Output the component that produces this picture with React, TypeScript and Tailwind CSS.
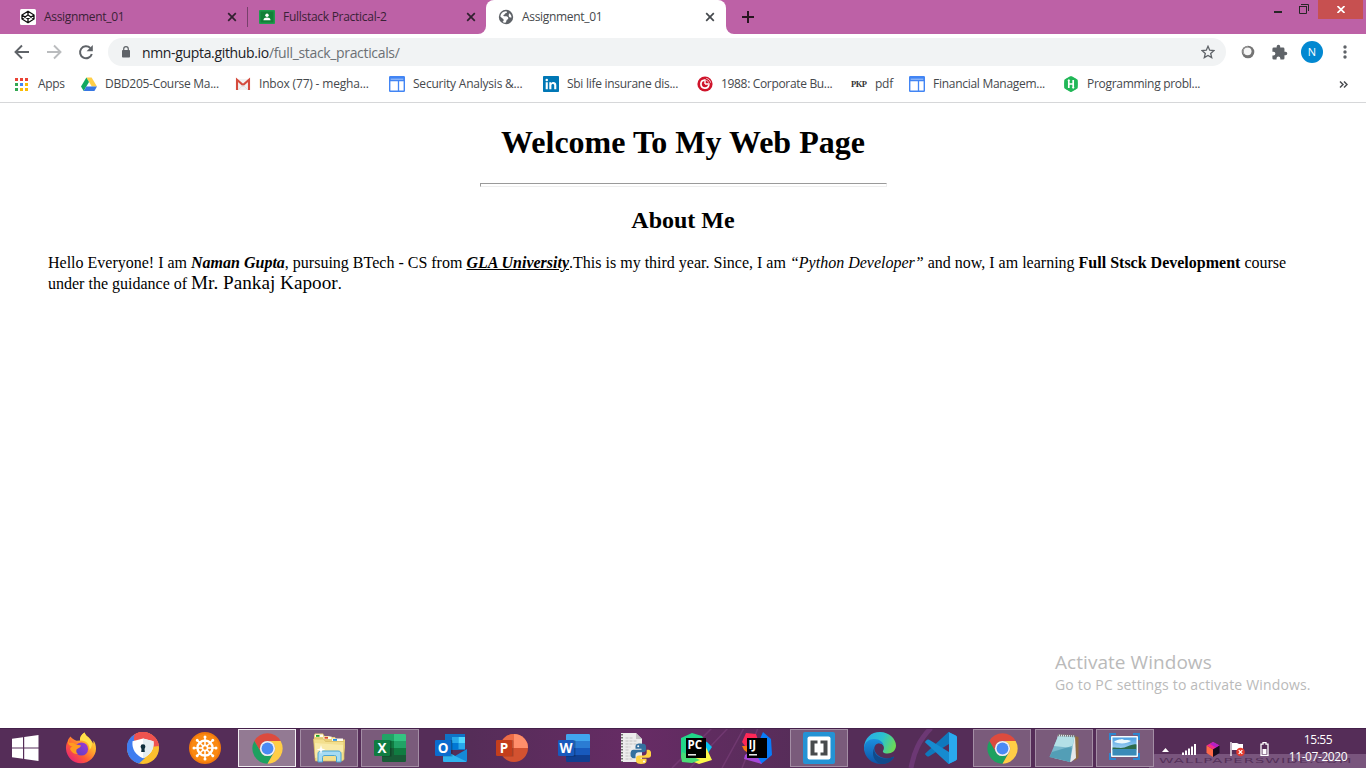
import React from "react";

type KidProps = { children?: React.ReactNode };

const Svg = ({ size, box = 16, children }: { size: number; box?: number; children: React.ReactNode }) => (
  <svg width={size} height={size} viewBox={`0 0 ${box} ${box}`} className="block shrink-0">
    {children}
  </svg>
);

/* ---------- browser icons ---------- */

const CodepenIcon = () => (
  <Svg size={16}>
    <rect width="16" height="16" rx="1.5" fill="#fff" />
    <path d="M8 2.2 14 6v4L8 13.8 2 10V6ZM2 6l6 4 6-4M2 10l6-4 6 4M8 2.2V6M8 10v3.8" fill="none" stroke="#111" strokeWidth="1.3" strokeLinejoin="round" />
  </Svg>
);

const ClassroomIcon = () => (
  <Svg size={16}>
    <rect y="1" width="16" height="14" rx="1" fill="#1e9b4d" />
    <rect x="1.5" y="2.5" width="13" height="11" fill="#128038" />
    <circle cx="8" cy="6.2" r="1.7" fill="#fff" />
    <path d="M4.4 11.2c0-1.9 1.9-2.6 3.6-2.6s3.6.7 3.6 2.6Z" fill="#fff" />
  </Svg>
);

const GlobeIcon = () => (
  <Svg size={16}>
    <circle cx="8" cy="8" r="7.2" fill="#5f6368" />
    <path d="M2.300 7.500C2.600 4.600 4.800 2.500 7.800 2.300c1.300.1 1.600.8.9 1.500-.5.6-1.700.4-1.900 1.300-.2.8-1.400.7-1.400 1.500 0 .9 1.100.7 2 .7 1.500 0 3 .4 2.900 1.900 0 1.200-1.600 1.100-1.800 2.200-.2 1-.4 1.900-1.300 2.300-1 .1-2-.3-2.700-.9.9-.5 1.300-1.200 1.100-2.100-.2-1-1.400-1.200-2-1.900-.4-.5-.8-1-1.300-1.300Z" fill="#fff" />
    <path d="M11 4.300c1.600.9 2.600 2.500 2.500 4.200-1 .3-2.400-.1-2.700-1.200-.3-1 .2-2 .2-3Z" fill="#fff" />
  </Svg>
);

const CloseX = ({ active = false }: { active?: boolean }) => (
  <svg width="10" height="10" viewBox="0 0 10 10" className="block shrink-0">
    <path d="m1.200 1.200 7.600 7.600M8.800 1.200 1.200 8.800" stroke={active ? "#45494d" : "#30202e"} strokeWidth="1.700" />
  </svg>
);

const DriveIcon = () => (
  <Svg size={16}>
    <path d="M5.400 1.500h5.200L16 10.500h-5.200Z" fill="#ffcf48" />
    <path d="M5.400 1.500 8 6 2.700 15 0 10.500Z" fill="#11a861" />
    <path d="M5.300 10.500H16L13.400 15H2.700Z" fill="#3777e3" />
  </Svg>
);

const GmailIcon = () => (
  <Svg size={16}>
    <path d="M1.500 3h13v11h-13Z" fill="#f2f2f2" />
    <path d="M2 14V3.800L8 9l6-5.200V14" fill="none" stroke="#d54b3d" strokeWidth="2.100" />
    <path d="m3 14 5-5 5 5" fill="none" stroke="#ddd" strokeWidth=".7" />
  </Svg>
);

const SitesIcon = () => (
  <Svg size={16}>
    <rect x=".7" y=".7" width="14.600" height="14.600" rx=".5" fill="#fff" stroke="#4285f4" strokeWidth="1.400" />
    <path d="M1 1h14v3.200H1Z" fill="#4285f4" />
    <path d="M1 4.700h14M9.500 4.700V15" stroke="#4285f4" strokeWidth="1.300" />
    <path d="M1.700 3.200h12.600" stroke="#c7dcfc" strokeWidth=".8" />
  </Svg>
);

const LinkedInIcon = () => (
  <Svg size={16}>
    <rect width="16" height="16" rx=".8" fill="#0077b5" />
    <path d="M2.700 6.200h2.100v7H2.700ZM6.300 6.200h2v1c.9-1.800 5-1.700 5 1.700v4.300h-2.100V9.500c0-2.100-2.800-2-2.800 0v3.700H6.300Z" fill="#fff" />
    <circle cx="3.750" cy="3.900" r="1.250" fill="#fff" />
  </Svg>
);

const RedIcon = () => (
  <Svg size={16}>
    <circle cx="8" cy="8" r="7.600" fill="#cf142b" />
    <path d="M7.700 4.100a4 4 0 1 0 4.200 4.500" fill="none" stroke="#fff" strokeWidth="1.700" />
    <path d="M8 8V3.300M8 8h4.700" stroke="#fff" strokeWidth="1.400" />
    <path d="M9.300 2.500c2.200.3 3.900 1.800 4.300 4.200M9.300 4.500c1.300.2 2.100 1 2.400 2.200" fill="none" stroke="#f4c3ca" strokeWidth="1" />
  </Svg>
);

const HackerRankIcon = () => (
  <Svg size={16}>
    <path d="M8 0c.6 0 6.200 3.200 6.600 3.800.4.600.4 7.800 0 8.400C14.200 12.800 8.600 16 8 16s-6.200-3.200-6.600-3.800c-.4-.6-.4-7.800 0-8.400C1.800 3.200 7.400 0 8 0Z" fill="#21b757" />
    <path d="M5.800 3.800v8.200M10.200 4v8.200M5.800 8h4.400" stroke="#fff" strokeWidth="1.700" />
    <path d="m4.300 4.800 1.500-1.600 1.500 1.600ZM8.700 11.200l1.500 1.600 1.500-1.600Z" fill="#fff" />
  </Svg>
);

const AppsIcon = () => {
  const colors = ["#ea4335", "#ea4335", "#ea4335", "#34a853", "#4285f4", "#fbbc05", "#34a853", "#fbbc05", "#fbbc05"];
  return (
    <Svg size={13} box={13}>
      {colors.map((c, i) => (
        <rect key={i} x={(i % 3) * 5} y={Math.floor(i / 3) * 5} width="3" height="3" fill={c} />
      ))}
    </Svg>
  );
};

/* ---------- taskbar icons ---------- */

const ChromeIcon = () => (
  <Svg size={31} box={48}>
    <path d="M3.650 12.250A23.500 23.500 0 0 1 44.350 12.250H24A11.750 11.750 0 0 0 13.800 29.800Z" fill="#dd4b3e" />
    <path d="M3.650 12.250 13.800 29.800A11.750 11.750 0 0 0 34.200 29.900L24 47.500A23.500 23.500 0 0 1 3.650 12.250Z" fill="#1da160" />
    <path d="M44.350 12.250A23.500 23.500 0 0 1 24 47.500L34.200 29.900A11.750 11.750 0 0 0 24 12.250Z" fill="#ffcd46" />
    <circle cx="24" cy="24" r="11.800" fill="#f1f1f1" />
    <circle cx="24" cy="24" r="9.200" fill="#4a8af4" />
  </Svg>
);

const FirefoxIcon = () => (
  <Svg size={32} box={32}>
    <defs>
      <linearGradient id="ffOuter" x1="1" y1="0" x2=".1" y2="1">
        <stop offset="0" stopColor="#fff44f" />
        <stop offset=".35" stopColor="#ffb12b" />
        <stop offset=".65" stopColor="#ff5a36" />
        <stop offset="1" stopColor="#e31587" />
      </linearGradient>
      <linearGradient id="ffInner" x1="0" y1="1" x2="1" y2="0">
        <stop offset="0" stopColor="#5b3fc0" />
        <stop offset="1" stopColor="#a13bd6" />
      </linearGradient>
    </defs>
    <path d="M5.500 4.500C4 6 3 7.500 2.700 9.300 1.300 11.500.8 14.300 1 17c.6 8 7 14.300 15 14.300S31 24.600 31 16.700c0-3.500-1-6.500-2.700-8.300.2 1.600.2 2.500 0 3.400C26.500 7 21.500 5.500 19.500.5c-3.500 2-4.700 5-4.500 8l-3.500.3C9 8 7 6.500 5.500 4.500Z" fill="url(#ffOuter)" />
    <circle cx="16.500" cy="17" r="6.600" fill="url(#ffInner)" />
    <path d="M5.500 4.500C4 6.500 3.500 8.500 4 11c2-.5 4.800-.3 6.500 1.200 2 1 4.500.6 5.500 1.400-.5 2-2.600 2.500-4.500 3.800-.5 2-.1 3.600 1.500 4.600-3 .6-6.300-1.500-7.500-4-1-2 .7-3 2-3.500C4 14 3 12 3 9Z" fill="#ff9a1f" />
    <path d="M19.500.5c-3.500 2-4.700 5-4.500 8 6-.5 10 3.500 9.500 9.500C30 12 25 6 22.500 4.500 21 3.500 20 2 19.500.5Z" fill="#ffe04a" />
  </Svg>
);

const LockBrowserIcon = () => (
  <Svg size={32} box={32}>
    <circle cx="16" cy="16" r="16" fill="#fbc02d" />
    <path d="M16 16 6 3.500A16 16 0 0 1 31.900 14Z" fill="#ee5350" />
    <path d="M6 3.500A16 16 0 0 0 12 31.500L18 26 9 20 7.500 8Z" fill="#3f7df0" />
    <path d="M6 3.500 7.500 9 26.500 9.300 31.900 14A16 16 0 0 0 6 3.500Z" fill="#ee5350" />
    <path d="M8 2.200A16 16 0 0 0 11 31.200C7 27 5 21 5.500 9.300Z" fill="#3f7df0" />
    <path d="M16 6.500 26.500 9.300c.8 8-3 13.700-10.500 17C8.500 23 4.700 17.300 5.500 9.300Z" fill="#fff" />
    <path d="M16 6.500v19.800c7.500-3.300 11.300-9 10.500-17Z" fill="#e3edf1" />
    <circle cx="16" cy="14.700" r="2.400" fill="#10303e" />
    <path d="M14.700 15h2.600l.5 5h-3.600Z" fill="#10303e" />
  </Svg>
);

const WheelIcon = () => {
  const spokes = [0, 45, 90, 135, 180, 225, 270, 315];
  return (
    <Svg size={32} box={32}>
      <circle cx="16" cy="16" r="16" fill="#f27a0c" />
      <circle cx="16" cy="16" r="14" fill="#fa8912" />
      <circle cx="16" cy="16" r="7.500" fill="none" stroke="#fff" strokeWidth="2.400" />
      <circle cx="16" cy="16" r="2.600" fill="none" stroke="#fff" strokeWidth="1.700" />
      {spokes.map((a) => (
        <g key={a} transform={`rotate(${a} 16 16)`}>
          <path d="M16 13.500V4.500" stroke="#fff" strokeWidth="1.600" />
          <circle cx="16" cy="5" r="1.500" fill="#fff" />
        </g>
      ))}
    </Svg>
  );
};

const FolderIcon = () => (
  <Svg size={34} box={34}>
    <path d="M2 9V4l1-1.500h8L12.500 5H17l1 1h5l1 2.500h9v8l-2 13H3Z" fill="#e9cf78" />
    <path d="M3 3.500h8V6H3ZM11.500 5.500h8V8h-8ZM20 7.500h11V10H20Z" fill="#fffdf0" />
    <path d="M4 4h3.500v1.800H4Z" fill="#1fa51f" />
    <path d="M12.500 5.900H16v1.800h-3.500Z" fill="#d74a27" />
    <path d="M21 8h4v1.800h-4Z" fill="#2391e5" />
    <path d="M1.500 8h10l2 2.500H32v18l-2 1.500H3.500Z" fill="#f3df8e" stroke="#d9bb62" strokeWidth=".7" />
    <path d="m3 12 28 2v7L3 27Z" fill="#fbeeb4" opacity=".7" />
    <path d="M6 31V23c0-2 1-3 3-3h17c2 0 3 1 3 3v8h-4.500v-5c0-1-1-1.500-2-1.500H13c-1.500 0-2.500.5-2.500 2V31Z" fill="#a6dbf3" stroke="#4aa4d2" strokeWidth="1" />
    <path d="m9 14 1 3.500 3.500 1-3.500 1-1 3.500-1-3.500-3.500-1 3.500-1Z" fill="#fff" />
  </Svg>
);

const OfficeTile = ({ letter, fill }: { letter: string; fill: string }) => (
  <g>
    <rect x="0" y="8" width="16" height="16" rx="1.300" fill={fill} />
    <text x="8" y="20.700" textAnchor="middle" fontSize="13.500" fontWeight="700" fill="#fff" fontFamily="Open Sans, sans-serif">
      {letter}
    </text>
  </g>
);

const ExcelIcon = () => (
  <Svg size={32} box={32}>
    <path d="M8 3.200Q8 2 9.200 2H20v7H8Z" fill="#21a366" />
    <path d="M20 2h10.800Q32 2 32 3.200V9H20Z" fill="#33c481" />
    <path d="M8 9h12v7H8ZM8 16h12v7H8Z" fill="#107c41" />
    <path d="M20 9h12v7H20Z" fill="#21a366" />
    <path d="M20 16h12v7H20Z" fill="#107c41" />
    <path d="M8 16h12v7h12v5.800Q32 30 30.800 30H9.200Q8 30 8 28.800Z" fill="#185c37" />
    <path d="M8 8h8.500Q17.500 8 17.500 9v15.500H8Z" fill="#000" opacity=".22" />
    <OfficeTile letter="X" fill="#107c41" />
  </Svg>
);

const OutlookIcon = () => (
  <Svg size={32} box={32}>
    <path d="M10 2h20v16H10Z" fill="#0f73c7" />
    <path d="M17 5h6.500v6H17Z" fill="#28a8ea" />
    <path d="M23.500 5H30v6h-6.500Z" fill="#50d9ff" />
    <path d="M17 11h6.500v6H17Z" fill="#0078d4" />
    <path d="M23.500 11H30v6h-6.500Z" fill="#28a8ea" />
    <path d="M8 17l12 7 12-7v11.500Q32 30 30.500 30h-21Q8 30 8 28.500Z" fill="#1489d8" />
    <path d="m8 17 12 7 11.500 5.500Q31 30 30.500 30h-21Q8 30 8 28.500Z" fill="#2fb3ee" />
    <path d="M8 8h8.500Q17.500 8 17.500 9v15.500H8Z" fill="#000" opacity=".22" />
    <OfficeTile letter="O" fill="#0a6cce" />
  </Svg>
);

const PowerPointIcon = () => (
  <Svg size={32} box={32}>
    <circle cx="18" cy="16" r="14" fill="#d35230" />
    <path d="M4 16A14 14 0 0 1 18 2V16Z" fill="#ed6c47" />
    <path d="M18 2A14 14 0 0 1 32 16H18Z" fill="#ff8f6b" />
    <path d="M6 8h10.500Q17.500 8 17.500 9v15.500H7Z" fill="#000" opacity=".2" />
    <OfficeTile letter="P" fill="#c43e1c" />
  </Svg>
);

const WordIcon = () => (
  <Svg size={32} box={32}>
    <path d="M8 3.200Q8 2 9.200 2h21.600Q32 2 32 3.200V9H8Z" fill="#41a5ee" />
    <path d="M8 9h24v7H8Z" fill="#2b7cd3" />
    <path d="M8 16h24v7H8Z" fill="#185abd" />
    <path d="M8 23h24v5.800Q32 30 30.800 30H9.200Q8 30 8 28.800Z" fill="#103f91" />
    <path d="M8 8h8.500Q17.500 8 17.500 9v15.500H8Z" fill="#000" opacity=".22" />
    <OfficeTile letter="W" fill="#185abd" />
  </Svg>
);

const PythonIcon = () => (
  <Svg size={32} box={32}>
    <path d="M2 1h15l6 6v23H2Z" fill="#ececec" />
    <path d="M17 1v6h6Z" fill="#c4c4c4" />
    <path d="M3 2v28" stroke="#555" strokeWidth="1.600" strokeDasharray="1.500 1.500" />
    <path d="M6.500 6h8M6.500 9h12M6.500 12h14M6.500 15h5M6.500 18h4M6.500 21h5M6.500 24h7M6.500 27h8" stroke="#c2c2c2" strokeWidth="1" strokeDasharray="3 1" />
    <path d="M21.500 11.500c-4 0-5 1.200-5 3.300v2h6v1h-8c-2 0-3 1.500-3 4.200s1.200 4.200 3 4.200h2v-3c0-2 1.500-3 3-3h4.500c1.800 0 3-1.300 3-3v-3c0-2-2-2.700-5.500-2.700Z" fill="#34709f" />
    <circle cx="19.200" cy="14.300" r="1" fill="#fff" />
    <path d="M22 32c4.200 0 5.500-1.200 5.500-3.300v-2h-6v-1h8c2 0 2.700-1.500 2.700-3.700s-1-4.200-2.700-4.200h-1.800v2.800c0 2-1.500 3-3 3H20c-2 0-3 1.300-3 3v2.400c0 2 2 3 5 3Z" fill="#ffd344" />
    <circle cx="25" cy="29.500" r="1" fill="#fff" />
  </Svg>
);

const JetLabel = ({ text }: { text: string }) => (
  <g>
    <rect x="6" y="6" width="20" height="20" fill="#000" />
    <text x="7.500" y="17" fontSize="11.500" fontWeight="700" fill="#fff" fontFamily="Open Sans, sans-serif">
      {text}
    </text>
    <path d="M8 22.800h8" stroke="#fff" strokeWidth="1.400" />
  </g>
);

const PyCharmIcon = () => (
  <Svg size={32} box={32}>
    <path d="m1 6 11-5 10 3 4 7v12L1 25Z" fill="#21d789" />
    <path d="m21 8 6 2 5 5-4 6-8 2Z" fill="#07c3f2" />
    <path d="m24 11 8 17-13 4-13-5 12-7Z" fill="#fcf84a" />
    <path d="m2 20 18 8-8 3-10-1-1-5Z" fill="#49dc76" />
    <JetLabel text="PC" />
  </Svg>
);

const IntelliJIcon = () => (
  <Svg size={32} box={32}>
    <path d="m5 1 10 1 3 9L7 18 1 10Z" fill="#fe2857" />
    <path d="M1 14h9v9l-7-5Z" fill="#f97a12" />
    <path d="m22 0 8 7 1 16-11 9-9-7Z" fill="#087cfa" />
    <path d="m4 23 8-5 9 14-18-5Z" fill="#a647d8" />
    <JetLabel text="IJ" />
  </Svg>
);

const BracketsIcon = () => (
  <Svg size={32} box={32}>
    <rect width="32" height="32" rx="2" fill="#2493d5" />
    <rect x="4.500" y="4.500" width="23" height="23" rx="2" fill="#fff" />
    <path d="M14.500 8.500h-7v15h7v-3h-3v-9h3ZM17.500 8.500h7v15h-7v-3h3v-9h-3Z" fill="#484b4d" />
  </Svg>
);

const EdgeIcon = () => (
  <Svg size={32} box={32}>
    <defs>
      <linearGradient id="edgeTop" x1="0" y1=".2" x2="1" y2=".5">
        <stop offset="0" stopColor="#2aa9e8" />
        <stop offset=".55" stopColor="#2bc3cf" />
        <stop offset="1" stopColor="#6bd957" />
      </linearGradient>
      <linearGradient id="edgeLow" x1="0" y1="0" x2="0" y2="1">
        <stop offset="0" stopColor="#1b8fdf" />
        <stop offset="1" stopColor="#0c52a5" />
      </linearGradient>
    </defs>
    <path d="M0 15C1 6 7 0 16 0s16 7 16 13.500c0 5-4 8-8.500 8-4 0-5.300-1.500-4.300-3 2-3 0-7.500-5-7.500-6 0-10.500 5-10.500 10C1 20 0 18 0 15Z" fill="url(#edgeTop)" />
    <path d="M0 15c1-5 5-8 10-8 6 0 9.500 3.500 9.700 7-1.700-3-5-3.500-7-2C8 15 10 25 22 26.500c3 .3 5.500-.7 7-1.500.8-.4 1 0 .6.700C27 30 22 32 17 32 7 32-.5 24 0 15Z" fill="url(#edgeLow)" />
    <path d="M12 13c-4 5-1 12 8 13.500 4 .5 7-.6 9-1.500.8-.4 1 0 .6.700C27 30 22 32 17 32c-7-2-11-11-5-19Z" fill="#114a8b" />
  </Svg>
);

const VSCodeIcon = () => (
  <Svg size={32} box={32}>
    <path d="m23.500 0 7.300 3.500Q32 4 32 5.500V7L4.200 24.200Q3 25 2 24.200L.5 22.800q-.8-.8 0-1.600Z" fill="#0f78bd" />
    <path d="m23.500 32 7.300-3.500Q32 28 32 26.500V25L4.200 7.800Q3 7 2 7.800L.5 9.200q-.8.800 0 1.600Z" fill="#168bd0" />
    <path d="M23.500 0 30.800 3.500Q32 4 32 5.500v21q0 1.500-1.200 2L23.500 32Q24 31.500 24 30V2Q24 .5 23.500 0Z" fill="#2aa9ee" />
  </Svg>
);

const NotepadIcon = () => (
  <Svg size={34} box={34}>
    <path d="M27 5 31.500 6v21L27 30Z" fill="#8f6c42" />
    <path d="m11 3.500 17 1L29 27l-5 4L7 27Z" fill="#e5e9ea" />
    <path d="M11 5.500h16.500L23 31 2.500 26Z" fill="#7ab9cd" />
    <path d="M11 5.500h16.500L25 17 7 15Z" fill="#b4e0e6" />
    <path d="M5 21 25 15 23 31 2.500 26Z" fill="#4796ad" opacity=".75" />
    <path d="m11 4 17 1" stroke="#777" strokeWidth="2.500" strokeDasharray="1 1" />
  </Svg>
);

const PhotoIcon = () => (
  <svg width="31" height="27" viewBox="0 0 31 27" className="-mt-1 block shrink-0">
    <defs>
      <linearGradient id="photoSky" x1="0" y1="0" x2="0" y2="1">
        <stop offset="0" stopColor="#4a9fe4" />
        <stop offset="1" stopColor="#d9eff8" />
      </linearGradient>
    </defs>
    <path d="M1 7V1h6M24 1h6v6M30 20v6h-6M7 26H1v-6" fill="none" stroke="#2e86cf" strokeWidth="2" />
    <rect x="2" y="3" width="27" height="21" rx="1" fill="#f6fafc" />
    <rect x="3.500" y="4.500" width="24" height="18" fill="url(#photoSky)" />
    <path d="M5 9c3-3 6-2 8-3 3 2 6 0 9 2-4 3-12 3-17 1Z" fill="#eef8fc" />
    <path d="M3.500 14.500c5 0 8 1 12 0s8-4 12-3v5h-24Z" fill="#2c6b4a" />
    <path d="M3.500 16h24v6.500h-24Z" fill="#3a8bb8" />
  </svg>
);

const WindowsIcon = () => (
  <svg width="27" height="26" viewBox="0 0 27 26" className="block shrink-0">
    <path d="M0 3.700 11 2.200v10.200H0ZM12.200 2 26.500 0v12.400H12.200ZM0 13.600h11v10.200L0 22.300ZM12.200 13.600h14.300V26l-14.300-2Z" fill="#fff" />
  </svg>
);

/* ---------- browser frame ---------- */

const ui = "font-['Open_Sans','Noto_Sans',sans-serif]";

const Bookmark = ({ icon, label, width, tracking }: { icon: React.ReactNode; label: string; width: string; tracking: string }) => (
  <div className={`flex shrink-0 items-center gap-2 ${width}`}>
    {icon}
    <span className={`whitespace-pre text-[12px] leading-4 text-[#45484c] ${tracking}`}>{label}</span>
  </div>
);

const TabStrip = () => (
  <div className="flex h-[34px] bg-white">
    <div className="flex w-[486px] items-center rounded-br-[8px] bg-[#bd61a6] text-[12px] text-[#3a2136]">
      <div className="flex h-5 w-[248px] items-center border-r border-[#77406b] pl-5 pr-[10px]">
        <CodepenIcon />
        <span className="ml-2 flex-1 tracking-[-0.32px]">Assignment_01</span>
        <CloseX />
      </div>
      <div className="flex h-5 w-[238px] items-center pl-[11px] pr-[10px]">
        <ClassroomIcon />
        <span className="ml-2 flex-1 tracking-[-0.28px]">Fullstack Practical-2</span>
        <CloseX />
      </div>
    </div>
    <div className="w-[240px] bg-linear-to-b from-[#bd61a6] from-30% to-white to-30%">
      <div className="flex h-full items-center rounded-t-[8px] bg-white pl-3 pr-[11px] text-[12px] text-[#45484c]">
        <GlobeIcon />
        <span className="ml-2 flex-1 tracking-[-0.32px]">Assignment_01</span>
        <CloseX active />
      </div>
    </div>
    <div className="flex flex-1 items-start justify-between rounded-bl-[8px] bg-[#bd61a6]">
      <svg width="12" height="12" viewBox="0 0 12 12" className="ml-4 mt-[11px]">
        <path d="M6 0v12M0 6h12" stroke="#27151f" strokeWidth="2" />
      </svg>
      <div className="flex pr-[3px]">
        <svg width="44" height="19" viewBox="0 0 44 19">
          <path d="M0 11h8v2H0Z" fill="#262626" />
          <path d="M25.500 6.500h7v7h-7ZM25 6.500h8" fill="none" stroke="#262626" />
          <path d="M27 4.500h7.500V11" fill="none" stroke="#262626" />
        </svg>
        <div className="flex h-[19px] w-[45px] items-center justify-center bg-[#c75050]">
          <svg width="8" height="7" viewBox="0 0 8 7">
            <path d="m.5 0 7 7M7.500 0l-7 7" stroke="#fff" strokeWidth="1.700" />
          </svg>
        </div>
      </div>
    </div>
  </div>
);

const Toolbar = () => (
  <div className="flex h-9 items-center pl-[14px]">
    <svg width="84" height="16" viewBox="0 0 84 16" className="shrink-0">
      <path d="M15 8H2M8 1.500 1.500 8 8 14.500" fill="none" stroke="#5f6368" strokeWidth="1.900" />
      <path d="M33 8h13M40 1.500 46.500 8 40 14.500" fill="none" stroke="#babcbe" strokeWidth="1.900" />
      <path d="M76.300 4A6 6 0 1 0 77.800 10" fill="none" stroke="#5f6368" strokeWidth="2" />
      <path d="M78.800 1v6.200h-6.200Z" fill="#5f6368" />
    </svg>
    <div className="ml-[10px] flex h-7 w-[1118px] shrink-0 items-center rounded-full bg-[#f1f3f4] pl-[14px] pr-[11px]">
      <svg width="8" height="12" viewBox="0 0 8 12" className="shrink-0">
        <rect y="4" width="8" height="7.500" rx=".8" fill="#5f6368" />
        <path d="M1.700 5V3a2.300 2.300 0 0 1 4.600 0v2" fill="none" stroke="#5f6368" strokeWidth="1.200" />
      </svg>
      <span className="ml-3 flex-1 text-[14px] tracking-[-0.34px] text-[#6c7074]">
        <span className="text-[#202124]">nmn-gupta.github.io</span>/full_stack_practicals/
      </span>
      <svg width="14" height="14" viewBox="0 0 14 14" className="shrink-0">
        <path d="m7 1.300 1.700 3.900 4.200.4L9.700 8.400l1 4.200L7 10.400l-3.700 2.200 1-4.200L1.100 5.600l4.200-.4Z" fill="none" stroke="#5f6368" strokeWidth="1.300" />
      </svg>
    </div>
    <svg width="14" height="14" viewBox="0 0 14 14" className="ml-[15px] shrink-0">
      <circle cx="7" cy="7" r="6.300" fill="#747474" />
      <circle cx="6.600" cy="6.300" r="3.900" fill="#f6f6f6" />
      <path d="M2.600 9A4.800 4.800 0 0 1 7 1.700" fill="none" stroke="#a5a5a5" />
    </svg>
    <svg width="17" height="17" viewBox="0 0 24 24" className="ml-4 shrink-0">
      <path d="M20.500 11H19V7a2 2 0 0 0-2-2h-4V3.500a2.500 2.500 0 0 0-5 0V5H4a2 2 0 0 0-2 2v3.800h1.500a2.700 2.700 0 0 1 0 5.400H2V20a2 2 0 0 0 2 2h3.800v-1.500a2.700 2.700 0 0 1 5.400 0V22H17a2 2 0 0 0 2-2v-4h1.500a2.500 2.500 0 0 0 0-5Z" fill="#5f6368" />
    </svg>
    <div className="ml-[13px] flex size-[22px] shrink-0 items-center justify-center rounded-full bg-[#0288d1] text-[11px] text-white">N</div>
    <svg width="4" height="14" viewBox="0 0 4 14" className="ml-5 shrink-0">
      <circle cx="2" cy="2" r="1.700" fill="#5f6368" />
      <circle cx="2" cy="7" r="1.700" fill="#5f6368" />
      <circle cx="2" cy="12" r="1.700" fill="#5f6368" />
    </svg>
  </div>
);

const Bookmarks = () => (
  <div className="flex h-[33px] items-center border-b border-[#d6d7d9] pb-1 pl-[15px]">
    <div className="flex w-[66px] shrink-0 items-center gap-[10px]">
      <AppsIcon />
      <span className="text-[12px] leading-4 tracking-[-0.3px] text-[#45484c]">Apps</span>
    </div>
    <Bookmark icon={<DriveIcon />} label="DBD205-Course Ma..." width="w-[154px]" tracking="tracking-[-0.28px]" />
    <Bookmark icon={<GmailIcon />} label="Inbox (77) - megha..." width="w-[154px]" tracking="tracking-[-0.18px]" />
    <Bookmark icon={<SitesIcon />} label="Security Analysis &..." width="w-[154px]" tracking="tracking-[-0.22px]" />
    <Bookmark icon={<LinkedInIcon />} label="Sbi life insurane dis..." width="w-[154px]" tracking="tracking-[-0.28px]" />
    <Bookmark icon={<RedIcon />} label="1988: Corporate Bu..." width="w-[154px]" tracking="tracking-[-0.33px]" />
    <Bookmark
      icon={<span className="w-4 font-['Liberation_Serif',serif] text-[8.5px] font-bold leading-4 tracking-[-0.5px] text-[#333]">PKP</span>}
      label="pdf"
      width="w-[58px]"
      tracking="tracking-[-0.25px]"
    />
    <Bookmark icon={<SitesIcon />} label="Financial Managem..." width="w-[154px]" tracking="tracking-[-0.28px]" />
    <Bookmark icon={<HackerRankIcon />} label="Programming probl..." width="w-[154px]" tracking="tracking-[-0.29px]" />
    <svg width="9" height="7" viewBox="0 0 9 7" className="ml-auto mr-[18px] shrink-0">
      <path d="m1 .5 3 3-3 3M5 .5l3 3-3 3" fill="none" stroke="#4b4e52" strokeWidth="1.500" />
    </svg>
  </div>
);

/* ---------- web page ---------- */

const WebPage = () => (
  <main className="flex flex-1 flex-col px-12 font-['Liberation_Serif',serif] text-[16px] text-black">
    <h1 className="mt-[21px] text-center text-[32px] font-bold leading-[37px]">Welcome To My Web Page</h1>
    <hr className="mx-auto mt-[22px] h-1 w-[407px] border border-b-[#eee] border-l-[#9a9a9a] border-r-[#eee] border-t-[#9a9a9a]" />
    <h2 className="mt-[19px] text-center text-[24px] font-bold leading-7">About Me</h2>
    <p className="mt-[18px] whitespace-nowrap leading-[21px]">
      Hello Everyone! I am <b><i>Naman Gupta</i></b>, pursuing BTech - CS from <b><i className="underline">GLA University</i></b>
      .This is my third year. Since, I am <i>“Python Developer”</i> and now, I am learning <b>Full Stsck Development</b> course
      <br />
      under the guidance of <span className="text-[19.2px] leading-none">Mr. Pankaj Kapoor</span>.
    </p>
    <div className={`mb-[33px] mr-2 mt-auto w-[255px] self-end text-[#bababa] ${ui}`}>
      <div className="whitespace-nowrap text-[19px] leading-6 tracking-[0.05px]">Activate Windows</div>
      <div className="whitespace-nowrap text-[14px] leading-[21px] tracking-[0.17px]">Go to PC settings to activate Windows.</div>
    </div>
  </main>
);

/* ---------- taskbar ---------- */

const Slot = ({ children }: KidProps) => <div className="flex w-[61.25px] shrink-0 items-center justify-center">{children}</div>;

const OpenSlot = ({ children, active = false }: KidProps & { active?: boolean }) => (
  <Slot>
    <div
      className={
        active
          ? "flex h-[38px] w-[58px] items-center justify-center border border-[#f1ecf1] bg-[#937a93]"
          : "flex h-[38px] w-[58px] items-center justify-center border border-[#a48ea5] bg-[#7a5b7b]"
      }
    >
      {children}
    </div>
  </Slot>
);

const Tray = () => (
  <div className="ml-auto flex h-full items-center text-white">
    <svg width="112" height="20" viewBox="0 0 112 20" className="mt-px">
      <path d="m0 13 3.500-4L7 13Z" fill="#fff" />
      <path d="M20 13.500h2V16h-2ZM23 11.500h2V16h-2ZM26 9.500h2V16h-2ZM29 7.500h2V16h-2ZM32 5h2v11h-2Z" fill="#fff" />
      <path d="m51 3 6.500 3.500-6.500 4-6.500-4Z" fill="#f32a8c" />
      <path d="m44.500 6.500 6.500 4V18l-6.500-4Z" fill="#ff6a48" />
      <path d="m51 3 6.500 3.500L54 8.700 48 5Z" fill="#b321c4" />
      <path d="m57.500 6.500-6.500 4V18l6.500-4Z" fill="#160c1e" />
      <path d="M69 3v14" stroke="#fff" strokeWidth="1.300" />
      <path d="M70 4h5l2 1h4v7h-4l-2-1h-5Z" fill="#fff" />
      <circle cx="78.500" cy="13" r="4.300" fill="#e43b2e" />
      <path d="m76.700 11.200 3.600 3.600M80.300 11.200l-3.600 3.600" stroke="#fff" strokeWidth="1.200" />
      <path d="M101 3.700h3v1.500h2v11.100h-7V5.200h2Z" fill="none" stroke="#fff" strokeWidth="1.300" />
      <path d="M100.500 10h4v5h-4Z" fill="#fff" />
    </svg>
    <div className="flex w-[92px] flex-col items-center pr-1 text-[12px] leading-[17px] tracking-[-0.42px]">
      <span>15:55</span>
      <span>11-07-2020</span>
    </div>
  </div>
);

const Taskbar = () => (
  <footer className="relative isolate flex h-10 items-center overflow-hidden bg-[#552d58] pl-3">
    <svg width="1366" height="40" viewBox="0 0 1366 40" className="absolute inset-0 -z-10">
      <defs>
        <linearGradient id="deskGlow" x1="0" y1="0" x2="1" y2="0">
          <stop offset="0" stopColor="#6b2b68" stopOpacity="0" />
          <stop offset=".5" stopColor="#6b2b68" stopOpacity=".8" />
          <stop offset="1" stopColor="#6b2b68" stopOpacity="0" />
        </linearGradient>
      </defs>
      <rect x="470" width="340" height="40" fill="url(#deskGlow)" />
      <path d="M672 40 712 0M690 40 728 0M722 40 744 0M742 40 758 0" stroke="#874786" strokeWidth="1.500" opacity=".45" />
      <path d="M911 40C914 24 919 12 931 0" fill="none" stroke="#6c3874" strokeWidth="5" />
      <path d="M0 .5h1366" stroke="#44204a" />
    </svg>
    <div className="absolute bottom-0 right-0 -z-10 flex h-[14px] w-[217px] items-center rounded-tl-[6px] bg-[#79557d] pl-[10px] font-['DejaVu_Sans',sans-serif] text-[7px] leading-[10px] tracking-[0.500px] text-[#543059]">
      <span className="origin-left scale-x-[2.1] whitespace-nowrap">WALLPAPERSWIDE.COM</span>
    </div>
    <WindowsIcon />
    <div className="ml-[11px] flex h-full">
      <div className="flex w-[62px] items-center justify-center"><FirefoxIcon /></div>
      <div className="flex w-[62px] items-center justify-center"><LockBrowserIcon /></div>
      <div className="mr-[0.8px] flex w-[62px] items-center justify-center"><WheelIcon /></div>
      <OpenSlot active><ChromeIcon /></OpenSlot>
      <OpenSlot><FolderIcon /></OpenSlot>
      <OpenSlot><ExcelIcon /></OpenSlot>
      <Slot><OutlookIcon /></Slot>
      <Slot><PowerPointIcon /></Slot>
      <Slot><WordIcon /></Slot>
      <Slot><PythonIcon /></Slot>
      <Slot><PyCharmIcon /></Slot>
      <Slot><IntelliJIcon /></Slot>
      <OpenSlot><BracketsIcon /></OpenSlot>
      <Slot><EdgeIcon /></Slot>
      <Slot><VSCodeIcon /></Slot>
      <OpenSlot><ChromeIcon /></OpenSlot>
      <OpenSlot><NotepadIcon /></OpenSlot>
      <OpenSlot><PhotoIcon /></OpenSlot>
    </div>
    <Tray />
  </footer>
);

export default function App() {
  return (
    <div className={`flex h-[768px] w-[1366px] flex-col overflow-hidden bg-white ${ui}`}>
      <TabStrip />
      <Toolbar />
      <Bookmarks />
      <WebPage />
      <Taskbar />
    </div>
  );
}
